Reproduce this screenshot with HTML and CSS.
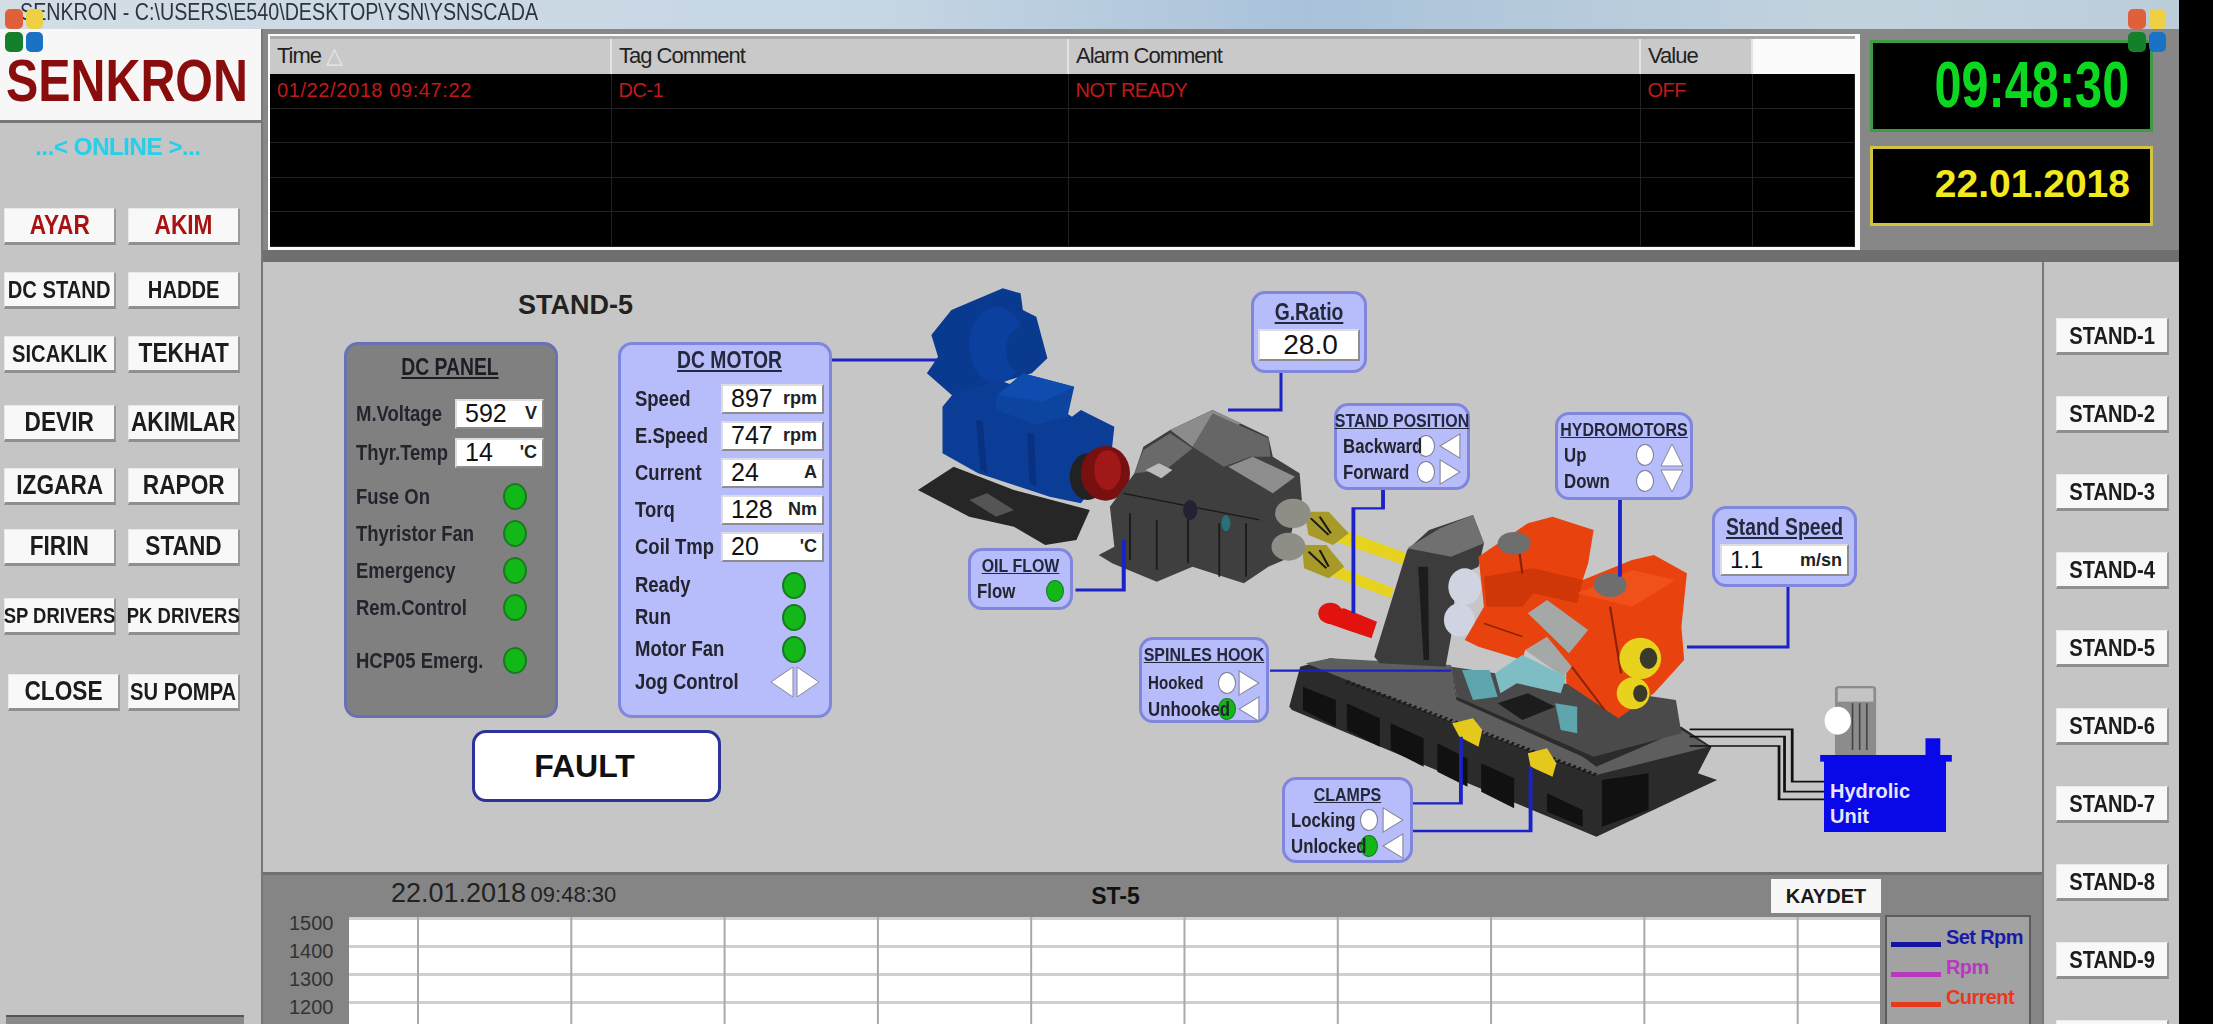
FILE: index.html
```html
<!DOCTYPE html>
<html lang="tr">
<head>
    <meta charset="UTF-8">
    <meta name="viewport" content="width=device-width, initial-scale=1.0">
    <title>SENKRON - YSNSCADA</title>
    <link rel="stylesheet" href="styles.css">
</head>
<body>
<div class="app">

    <div class="titlebar"><span>SENKRON - C:\USERS\E540\DESKTOP\YSN\YSNSCADA</span></div>

    <div class="cubes cubes-left"><i class="c1"></i><i class="c2"></i><i class="c3"></i><i class="c4"></i></div>
    <div class="cubes cubes-right"><i class="c1"></i><i class="c2"></i><i class="c3"></i><i class="c4"></i></div>

    <!-- sol menu -->
    <aside class="sidebar">
        <div class="logo"><span>SENKRON</span></div>
        <div class="online">...&lt; ONLINE &gt;...</div>
        <div class="menu">
            <div class="menu-row"><button class="btn red"><span>AYAR</span></button><button class="btn red"><span>AKIM</span></button></div>
            <div class="menu-row"><button class="btn sm"><span>DC STAND</span></button><button class="btn sm"><span>HADDE</span></button></div>
            <div class="menu-row"><button class="btn sm"><span>SICAKLIK</span></button><button class="btn"><span>TEKHAT</span></button></div>
            <div class="menu-row"><button class="btn"><span>DEVIR</span></button><button class="btn"><span>AKIMLAR</span></button></div>
            <div class="menu-row"><button class="btn"><span>IZGARA</span></button><button class="btn"><span>RAPOR</span></button></div>
            <div class="menu-row"><button class="btn"><span>FIRIN</span></button><button class="btn"><span>STAND</span></button></div>
            <div class="menu-row"><button class="btn xs"><span>SP DRIVERS</span></button><button class="btn xs"><span>PK DRIVERS</span></button></div>
            <div class="menu-row last"><button class="btn"><span>CLOSE</span></button><button class="btn sm"><span>SU POMPA</span></button></div>
        </div>
        <div class="side-foot"></div>
    </aside>

    <!-- alarm listesi ve saat -->
    <section class="band">
        <div class="alarm-wrap">
            <table class="alarms">
                <thead>
                    <tr><th class="col-time">Time <span class="sort">△</span></th><th class="col-tag">Tag Comment</th><th class="col-alarm">Alarm Comment</th><th class="col-value">Value</th><th class="col-rest"></th></tr>
                </thead>
                <tbody>
                    <tr><td class="stamp-cell">01/22/2018 09:47:22</td><td>DC-1</td><td>NOT READY</td><td>OFF</td><td></td></tr>
                    <tr><td></td><td></td><td></td><td></td><td></td></tr>
                    <tr><td></td><td></td><td></td><td></td><td></td></tr>
                    <tr><td></td><td></td><td></td><td></td><td></td></tr>
                    <tr><td></td><td></td><td></td><td></td><td></td></tr>
                </tbody>
            </table>
        </div>
        <div class="clocks">
            <div class="clock"><span>09:48:30</span></div>
            <div class="date">22.01.2018</div>
        </div>
    </section>

    <!-- tesis semasi -->
    <main class="plant">
        <svg class="machine" viewBox="263 262 1779 613" width="1779" height="613">
            <!-- baglanti hatlari (alt) -->
            <g fill="none" stroke="#1a22c8" stroke-width="3">
                <path d="M832 360H951"/>
                <path d="M1281 373V410H1228"/>
                <path d="M1788 587V647H1687"/>
            </g>

            <!-- motor ve redüktör -->
            <g transform="translate(880 260) scale(.4464 .3333)">
                <polygon fill="#262626" points="85,690 165,620 300,690 470,750 440,840 370,855 300,800 200,770"/>
                <polygon fill="#555" points="200,720 240,700 300,750 260,770"/>
                <polygon fill="#0a3a90" points="115,225 160,150 275,85 315,100 320,150 350,170 375,295 340,340 265,370 255,420 165,410 105,340 130,290"/>
                <ellipse fill="#0b40a0" cx="262" cy="255" rx="62" ry="115"/>
                <ellipse fill="#0a3a8c" cx="320" cy="270" rx="38" ry="70"/>
                <polygon fill="#0b3c96" points="165,400 265,360 350,400 430,470 450,450 525,500 515,620 450,730 380,710 220,640 140,580 140,440"/>
                <polygon fill="#0a3080" points="215,480 225,630 240,640 230,485"/>
                <polygon fill="#0a3080" points="330,520 335,670 350,680 345,520"/>
                <polygon fill="#0c44a0" points="260,405 320,340 435,380 420,470 350,495 260,450"/>
                <polygon fill="#0e4cb0" points="265,405 320,340 435,380 365,425"/>
                <ellipse fill="#222" cx="465" cy="650" rx="40" ry="70"/>
                <ellipse fill="#781010" cx="505" cy="640" rx="55" ry="82"/>
                <ellipse fill="#a01818" cx="510" cy="630" rx="30" ry="60"/>
                <polygon fill="#3f3f3f" points="515,740 570,640 590,560 650,510 745,450 870,530 880,590 940,640 945,720 925,800 905,900 870,920 815,970 700,920 620,965 520,910 490,885 525,860"/>
                <polygon fill="#8c8c8c" points="650,510 745,450 810,490 700,560"/>
                <polygon fill="#6a6a6a" points="590,570 650,520 700,565 640,630 570,640"/>
                <polygon fill="#bbb" points="595,630 625,610 655,630 630,655"/>
                <polygon fill="#666" points="745,460 870,535 875,590 830,590 770,620 700,560"/>
                <polygon fill="#8e8e8e" points="780,620 835,590 930,650 880,700"/>
                <g stroke="#1a1a1a" stroke-width="4" fill="none">
                    <path d="M545 700 L850 780M560 760L560 900M620 780L620 930M690 760V910M760 790V950M820 790V950"/>
                </g>
                <ellipse fill="#223" cx="695" cy="750" rx="16" ry="30"/>
                <ellipse fill="#2a7078" cx="775" cy="790" rx="10" ry="24"/>
                <!-- miller -->
                <polygon fill="#e5d320" points="1020,800 1180,880 1175,915 1010,840"/>
                <polygon fill="#e5d320" points="1010,910 1150,985 1145,1015 1005,945"/>
                <polygon fill="#a89a28" points="950,755 1005,755 1050,820 1015,855 960,825"/>
                <polygon fill="#a89a28" points="945,855 1000,855 1040,920 1005,955 950,925"/>
                <path d="M965 775l40 50M985 770l25 50M960 875l40 50M985 870l20 50" stroke="#1a1a1a" stroke-width="5" fill="none"/>
                <ellipse fill="#8e8e86" cx="925" cy="760" rx="40" ry="44"/>
                <ellipse fill="#8e8e86" cx="915" cy="860" rx="38" ry="42"/>
                <path d="M546 840V990H438" fill="none" stroke="#1a22c8" stroke-width="9"/>
            </g>

            <!-- hadde standi -->
            <g transform="translate(1100 480) scale(.5485 .3333)">
                <polygon fill="#2b2b2b" points="345,680 365,560 420,535 520,560 640,560 650,650 880,760 1060,740 1115,800 1090,880 1125,900 905,1070 350,690"/>
                <polygon fill="#5e5e5e" points="375,550 420,535 640,555 650,660 880,830 905,860 1060,750 1110,800 905,885 640,725 450,600"/>
                <polygon fill="#4a4a4a" points="640,560 1050,660 1060,760 900,830 650,650"/>
                <path d="M450 605L905 885" fill="none" stroke="#1a1a1a" stroke-width="10" stroke-dasharray="5 6"/>
                <g fill="#111">
                    <polygon points="370,620 430,660 430,740 370,690"/>
                    <polygon points="450,670 510,715 510,800 450,750"/>
                    <polygon points="530,730 590,775 590,860 530,810"/>
                    <polygon points="615,790 670,835 670,920 615,875"/>
                    <polygon points="695,850 755,895 755,985 695,935"/>
                    <polygon points="815,940 880,990 880,1040 815,995"/>
                    <polygon points="915,900 1000,880 1000,990 915,1040"/>
                </g>
                <polygon fill="#3c3c3c" points="500,530 560,210 600,150 680,105 700,190 690,260 650,290 640,470 630,560 510,550"/>
                <polygon fill="#707070" points="560,205 620,145 680,105 700,190 640,230"/>
                <polygon fill="#1c1c1c" points="580,260 590,540 600,540 598,260"/>
                <ellipse fill="#cfd3e2" cx="665" cy="320" rx="30" ry="55"/>
                <ellipse fill="#cfd3e2" cx="655" cy="420" rx="28" ry="50"/>
                <polygon fill="#e2130f" points="420,390 445,385 505,425 495,475 450,450 415,430"/>
                <ellipse fill="#e2130f" cx="420" cy="400" rx="22" ry="32"/>
                <polygon fill="#e8430f" points="665,480 700,380 690,230 780,130 825,110 900,150 890,250 880,300 970,240 1010,225 1070,280 1060,440 1065,540 1010,640 945,715 850,610 850,540 775,510 770,540 690,500"/>
                <polygon fill="#cf3608" points="700,290 790,265 880,300 870,370 790,340 770,380 705,380"/>
                <polygon fill="#f0501a" points="870,340 970,270 1050,300 970,380"/>
                <path d="M760 160l10 120M930 380l20 200M860 560l60 130M700 430l70 40" fill="none" stroke="#8a2206" stroke-width="4"/>
                <polygon fill="#a4a9a8" points="780,400 815,360 890,450 855,520"/>
                <polygon fill="#a4a9a8" points="775,510 815,470 860,560 845,590"/>
                <polygon fill="#7ebdc4" points="720,580 770,525 850,590 840,640 760,610 730,640"/>
                <polygon fill="#5fa5ae" points="660,570 710,570 725,650 680,660"/>
                <polygon fill="#5fa5ae" points="830,670 870,680 870,760 840,750"/>
                <polygon fill="#1c1c1c" points="725,670 780,640 830,680 770,720"/>
                <ellipse fill="#6e6e6e" cx="755" cy="190" rx="30" ry="34"/>
                <ellipse fill="#6e6e6e" cx="930" cy="315" rx="30" ry="36"/>
                <ellipse fill="#e8d21e" cx="985" cy="535" rx="38" ry="62"/>
                <ellipse fill="#3a3a2a" cx="1000" cy="535" rx="16" ry="32"/>
                <ellipse fill="#e8d21e" cx="972" cy="640" rx="30" ry="48"/>
                <ellipse fill="#3a3a2a" cx="985" cy="640" rx="13" ry="26"/>
                <polygon fill="#e5c81c" points="642,730 680,715 697,750 690,800 655,770"/>
                <polygon fill="#e5c81c" points="780,820 815,805 832,850 825,890 785,860"/>
                <!-- hidrolik boru -->
                <g fill="none" stroke="#111" stroke-width="5">
                    <path d="M1075 748H1262V905H1322"/>
                    <path d="M1075 770H1248V935H1322"/>
                    <path d="M1075 798H1238V958H1322"/>
                </g>
                <rect fill="#8c8c8c" x="1340" y="618" width="75" height="210" rx="8"/>
                <rect fill="#c4c4c4" x="1345" y="625" width="65" height="40"/>
                <path d="M1372 670V810M1385 670V810M1398 670V810" stroke="#444" stroke-width="3"/>
                <ellipse fill="#fff" cx="1345" cy="722" rx="24" ry="42"/>
                <rect fill="#0808e8" x="1505" y="775" width="27" height="60"/>
                <rect fill="#0808e8" x="1313" y="825" width="240" height="20"/>
                <g fill="none" stroke="#1a22c8" stroke-width="7">
                    <path d="M948 50V290"/>
                    <path d="M516 30V85H462V400"/>
                    <path d="M310 572H640"/>
                    <path d="M570 970H658V770"/>
                    <path d="M570 1053H785V860"/>
                </g>
            </g>
        </svg>

        <h2 class="stand-title">STAND-5</h2>

        <div class="node dc-panel">
            <h3 class="node-title">DC PANEL</h3>
            <div class="row first"><span class="lbl">M.Voltage</span><div class="value"><b>592</b><em>V</em></div></div>
            <div class="row"><span class="lbl">Thyr.Temp</span><div class="value"><b>14</b><em>'C</em></div></div>
            <div class="lamps">
                <div class="lamp-row"><span class="lbl">Fuse On</span><i class="led"></i></div>
                <div class="lamp-row"><span class="lbl">Thyristor Fan</span><i class="led"></i></div>
                <div class="lamp-row"><span class="lbl">Emergency</span><i class="led"></i></div>
                <div class="lamp-row"><span class="lbl">Rem.Control</span><i class="led"></i></div>
                <div class="lamp-row spaced"><span class="lbl">HCP05 Emerg.</span><i class="led"></i></div>
            </div>
        </div>

        <div class="node dc-motor">
            <h3 class="node-title">DC MOTOR</h3>
            <div class="row first"><span class="lbl">Speed</span><div class="value"><b>897</b><em>rpm</em></div></div>
            <div class="row"><span class="lbl">E.Speed</span><div class="value"><b>747</b><em>rpm</em></div></div>
            <div class="row"><span class="lbl">Current</span><div class="value"><b>24</b><em>A</em></div></div>
            <div class="row"><span class="lbl">Torq</span><div class="value"><b>128</b><em>Nm</em></div></div>
            <div class="row"><span class="lbl">Coil Tmp</span><div class="value"><b>20</b><em>'C</em></div></div>
            <div class="motor-lamps">
                <div class="lamp-row"><span class="lbl">Ready</span><i class="led"></i></div>
                <div class="lamp-row"><span class="lbl">Run</span><i class="led"></i></div>
                <div class="lamp-row"><span class="lbl">Motor Fan</span><i class="led"></i></div>
                <div class="lamp-row"><span class="lbl">Jog Control</span>
                    <svg class="jog" viewBox="0 0 50 32"><polygon points="23,1 1,16 23,31" fill="#fff" stroke="#889"/><polygon points="27,1 49,16 27,31" fill="#fff" stroke="#889"/></svg>
                </div>
            </div>
        </div>

        <div class="fault">FAULT</div>

        <div class="node g-ratio">
            <h3 class="node-title">G.Ratio</h3>
            <div class="value center"><b>28.0</b></div>
        </div>

        <div class="node small stand-pos">
            <h3 class="node-title">STAND POSITION</h3>
            <div class="ctl"><span class="lbl">Backward</span><i class="lamp"></i><svg class="tri" viewBox="0 0 20 24"><polygon points="19,1 1,12 19,23" fill="#fff" stroke="#889"/></svg></div>
            <div class="ctl"><span class="lbl">Forward</span><i class="lamp"></i><svg class="tri" viewBox="0 0 20 24"><polygon points="1,1 19,12 1,23" fill="#fff" stroke="#889"/></svg></div>
        </div>

        <div class="node small hydro">
            <h3 class="node-title">HYDROMOTORS</h3>
            <div class="hydro-body">
                <div class="hydro-rows">
                    <div class="ctl"><span class="lbl">Up</span><i class="lamp"></i></div>
                    <div class="ctl"><span class="lbl">Down</span><i class="lamp"></i></div>
                </div>
                <svg class="updown" viewBox="0 0 24 50"><polygon points="1,23 12,1 23,23" fill="#fff" stroke="#889"/><polygon points="1,27 12,49 23,27" fill="#fff" stroke="#889"/></svg>
            </div>
        </div>

        <div class="node small oil">
            <h3 class="node-title">OIL FLOW</h3>
            <div class="ctl"><span class="lbl">Flow</span><i class="led sm"></i></div>
        </div>

        <div class="node small spin">
            <h3 class="node-title">SPINLES HOOK</h3>
            <div class="ctl"><span class="lbl hooked">Hooked</span><i class="lamp"></i><svg class="tri" viewBox="0 0 20 24"><polygon points="1,1 19,12 1,23" fill="#fff" stroke="#889"/></svg></div>
            <div class="ctl"><span class="lbl">Unhooked</span><i class="led sm"></i><svg class="tri" viewBox="0 0 20 24"><polygon points="19,1 1,12 19,23" fill="#fff" stroke="#889"/></svg></div>
        </div>

        <div class="node speed">
            <h3 class="node-title">Stand Speed</h3>
            <div class="value"><b>1.1</b><em>m/sn</em></div>
        </div>

        <div class="node small clamps">
            <h3 class="node-title">CLAMPS</h3>
            <div class="ctl"><span class="lbl">Locking</span><i class="lamp"></i><svg class="tri" viewBox="0 0 20 24"><polygon points="1,1 19,12 1,23" fill="#fff" stroke="#889"/></svg></div>
            <div class="ctl"><span class="lbl">Unlocked</span><i class="led sm"></i><svg class="tri" viewBox="0 0 20 24"><polygon points="19,1 1,12 19,23" fill="#fff" stroke="#889"/></svg></div>
        </div>

        <div class="hyd-unit">Hydrolic<br>Unit</div>
    </main>

    <!-- stand secimi -->
    <nav class="stands">
        <button class="btn stand"><span>STAND-1</span></button>
        <button class="btn stand"><span>STAND-2</span></button>
        <button class="btn stand"><span>STAND-3</span></button>
        <button class="btn stand"><span>STAND-4</span></button>
        <button class="btn stand"><span>STAND-5</span></button>
        <button class="btn stand"><span>STAND-6</span></button>
        <button class="btn stand"><span>STAND-7</span></button>
        <button class="btn stand"><span>STAND-8</span></button>
        <button class="btn stand"><span>STAND-9</span></button>
        <button class="btn stand"></button>
    </nav>

    <!-- grafik -->
    <section class="chart">
        <div class="chart-head">
            <div class="stamp"><span class="stamp-date">22.01.2018</span> <span class="stamp-time">09:48:30</span></div>
            <div class="chart-name">ST-5</div>
            <button class="save">KAYDET</button>
        </div>
        <div class="chart-body">
            <div class="axis"><span>1500</span><span>1400</span><span>1300</span><span>1200</span></div>
            <div class="plot"></div>
            <div class="legend">
                <div class="leg blue"><i></i><span>Set Rpm</span></div>
                <div class="leg pink"><i></i><span>Rpm</span></div>
                <div class="leg orange"><i></i><span>Current</span></div>
            </div>
        </div>
    </section>
</div>
</body>
</html>
```

FILE: styles.css
```css
* {
    box-sizing: border-box;
}

html, body {
    margin: 0;
    height: 100%;
    background-color: #000;
    overflow: hidden;
}

body {
    font-family: "Liberation Sans", Arial, sans-serif;
    color: #222;
}

.app {
    position: relative;
    width: 2179px;
    height: 1024px;
    overflow: hidden;
    display: grid;
    grid-template-columns: 263px 1779px 137px;
    grid-template-rows: 29px 233px 613px 149px;
    background-color: #c5c5c5;
}

.titlebar {
    grid-column: 1 / 4;
    padding-left: 20px;
    font-size: 24px;
    line-height: 24px;
    color: #2c3440;
    white-space: nowrap;
    background: linear-gradient(90deg, #d3dde4 0%, #c6d6e4 40%, #a9c2da 60%, #c3d3de 85%, #bccdda 100%);
}

.titlebar span {
    display: inline-block;
    transform: scaleX(.82);
    transform-origin: left center;
}

.cubes {
    position: absolute;
    top: 9px;
    width: 38px;
    height: 43px;
    display: grid;
    grid-template-columns: 1fr 1fr;
    gap: 3px;
    z-index: 5;
}

.cubes i {
    border-radius: 5px;
}

.cubes-left { left: 5px; }
.cubes-right { left: 2128px; }
.c1 { background-color: #e0603a; }
.c2 { background-color: #eed044; }
.c3 { background-color: #15802c; }
.c4 { background-color: #1a72c4; }

/* sol menu */
.sidebar {
    grid-column: 1;
    grid-row: 2 / 5;
    position: relative;
    background-color: #c5c5c5;
    border-right: 2px solid #777;
}

.logo {
    height: 94px;
    padding: 22px 0 0 6px;
    font-size: 59px;
    line-height: 60px;
    font-weight: bold;
    color: #8a0d0d;
    background-color: #f7f7f7;
    border-bottom: 3px solid #777;
}

.logo span {
    display: inline-block;
    transform: scaleX(.82);
    transform-origin: left center;
}

.online {
    margin-top: 10px;
    padding-right: 26px;
    text-align: center;
    font-size: 24px;
    line-height: 28px;
    font-weight: bold;
    letter-spacing: -.4px;
    color: #27cfe8;
}

.menu {
    margin-top: 47px;
    padding-left: 4px;
}

.menu-row {
    display: flex;
    gap: 12px;
    margin-bottom: 27px;
}

.menu-row:nth-child(3) { margin-bottom: 32px; }
.menu-row:nth-child(4) { margin-bottom: 26px; }
.menu-row:nth-child(5) { margin-bottom: 24px; }
.menu-row:nth-child(6) { margin-bottom: 32px; }
.menu-row:nth-child(7) { margin-bottom: 39px; }

.menu-row .btn {
    width: 112px;
}

.menu-row.last {
    padding-left: 4px;
    gap: 8px;
}

.btn {
    display: flex;
    align-items: center;
    justify-content: center;
    height: 37px;
    padding: 0;
    font-family: inherit;
    font-size: 27px;
    font-weight: bold;
    color: #1c1c1c;
    white-space: nowrap;
    background-color: #f8f8f8;
    border: 1px solid #e8e8e8;
    border-bottom: 3px solid #8f8f8f;
    border-right: 2px solid #9a9a9a;
}

.btn span {
    flex: none;
    transform: scaleX(.84);
}

.btn.red { color: #a81212; }
.btn.sm { font-size: 24px; }
.btn.xs { font-size: 22px; }

.side-foot {
    position: absolute;
    left: 6px;
    top: 986px;
    width: 238px;
    height: 20px;
    background-color: #8a8a8a;
    border-top: 2px solid #555;
}

/* alarm bandi */
.band {
    grid-column: 2 / 4;
    grid-row: 2;
    display: flex;
    padding: 5px 0 0 5px;
    background-color: #878787;
    border-bottom: 12px solid #6f6f6f;
}

.alarm-wrap {
    width: 1592px;
    height: 216px;
    padding: 2px 5px 5px 2px;
    background-color: #fbfbfb;
}

.alarms {
    width: 1585px;
    height: 209px;
    border-collapse: collapse;
    table-layout: fixed;
    background-color: #000;
}

.alarms th {
    height: 36px;
    padding: 0 0 0 7px;
    font-size: 22px;
    font-weight: normal;
    letter-spacing: -1px;
    text-align: left;
    background-color: #c9c9c9;
    border-right: 2px solid #e4e4e4;
    border-top: 3px solid #aaa;
}

.alarms th.col-rest {
    background-color: #fbfbfb;
    border-right: 0;
}

.alarms .sort { color: #e6e6e6; }
.col-time { width: 341px; }
.col-tag { width: 457px; }
.col-alarm { width: 572px; }
.col-value { width: 112px; }

.alarms td {
    padding: 0 0 0 7px;
    height: 34.5px;
    font-size: 20px;
    letter-spacing: -.5px;
    color: #c01a1a;
    border-right: 1px solid #222;
    border-bottom: 1px solid #222;
}

.alarms td.stamp-cell {
    letter-spacing: .6px;
}

.clocks {
    margin: 6px 0 0 10px;
    width: 283px;
    display: flex;
    flex-direction: column;
    gap: 14px;
}

.clock, .date {
    background-color: #000;
    font-weight: bold;
    text-align: right;
}

.clock {
    height: 92px;
    padding-right: 31px;
    font-size: 64px;
    line-height: 84px;
    color: #0cd820;
    border: 3px solid #3f9a44;
}

.clock span {
    display: inline-block;
    transform: scaleX(.76);
    transform-origin: right center;
}

.date {
    height: 80px;
    padding-right: 20px;
    font-size: 39px;
    line-height: 70px;
    color: #f2ea1e;
    border: 3px solid #d2c440;
}

/* tesis semasi */
.plant {
    grid-column: 2;
    grid-row: 3;
    position: relative;
    background-color: #c6c6c6;
    border-bottom: 3px solid #6f6f6f;
}

.machine {
    position: absolute;
    left: 0;
    top: 0;
    filter: blur(.6px);
}

.stand-title {
    position: absolute;
    left: 255px;
    top: 27px;
    margin: 0;
    font-size: 27px;
    line-height: 32px;
    color: #222;
}

.node {
    position: absolute;
    padding: 8px 10px;
    background-color: #b7bcfa;
    border: 3px solid #7f86dc;
    border-radius: 14px;
}

.node-title {
    display: flex;
    justify-content: center;
    margin: 0;
    font-size: 23px;
    line-height: 24px;
    font-weight: bold;
    white-space: nowrap;
    text-decoration: underline;
    color: #24283c;
    transform: scaleX(.84);
}

.lbl {
    flex: 1;
    min-width: 0;
    font-size: 22px;
    font-weight: bold;
    color: #24242e;
    white-space: nowrap;
    transform: scaleX(.84);
    transform-origin: left center;
}

.value {
    display: flex;
    align-items: center;
    justify-content: space-between;
    height: 30px;
    padding: 0 5px 0 8px;
    background-color: #fff;
    border: 2px solid #8d8d8d;
    border-top-color: #ddd;
    border-left-color: #ddd;
}

.value b {
    font-size: 25px;
    font-weight: normal;
    color: #111;
}

.value em {
    font-size: 18px;
    font-style: normal;
    font-weight: bold;
    color: #222;
}

.value.center {
    justify-content: center;
}

.row {
    display: flex;
    align-items: center;
    height: 37px;
}

.led {
    display: block;
    width: 24px;
    height: 27px;
    flex: none;
    border-radius: 50%;
    background-color: #12b818;
    border: 2px solid #1a7a20;
}

.led.sm {
    width: 18px;
    height: 22px;
    border-width: 1px;
}

.lamp {
    display: block;
    flex: none;
    width: 18px;
    height: 22px;
    border-radius: 50%;
    background-color: #fff;
    border: 1px solid #7a7a90;
}

.lamp-row {
    display: flex;
    align-items: center;
    height: 37px;
}

.dc-panel {
    left: 81px;
    top: 80px;
    width: 214px;
    height: 376px;
    padding: 5px 11px 0 9px;
    background-color: #808080;
    border-color: #6a70b4;
}

.dc-panel .node-title {
    margin-top: 5px;
    color: #1c1c26;
}

.dc-panel .row .value {
    width: 89px;
    flex: none;
}

.dc-panel .row.first {
    margin-top: 15px;
}

.dc-panel .row {
    height: 39px;
}

.dc-panel .lamps {
    margin-top: 6px;
    padding-right: 17px;
}

.dc-panel .lamp-row.spaced {
    margin-top: 16px;
}

.dc-motor {
    left: 355px;
    top: 80px;
    width: 214px;
    height: 376px;
    padding: 3px 5px 0 14px;
}

.dc-motor .row.first {
    margin-top: 8px;
}

.dc-motor .row .value {
    width: 103px;
    flex: none;
}

.motor-lamps {
    margin-top: 4px;
}

.motor-lamps .lamp-row {
    height: 32px;
    padding-right: 18px;
}

.motor-lamps .lamp-row:last-child {
    height: 34px;
    padding-right: 4px;
}

.jog {
    flex: none;
    width: 50px;
    height: 32px;
}

.fault {
    position: absolute;
    left: 209px;
    top: 468px;
    width: 249px;
    height: 72px;
    padding-right: 24px;
    text-align: center;
    font-size: 32px;
    line-height: 66px;
    font-weight: bold;
    color: #111;
    background-color: #fff;
    border: 3px solid #2c329c;
    border-radius: 14px;
}

.g-ratio {
    left: 988px;
    top: 29px;
    width: 116px;
    height: 82px;
    padding: 6px 4px 0;
}

.g-ratio .value {
    margin-top: 5px;
    height: 32px;
}

.g-ratio .value b {
    font-size: 28px;
}

.small {
    padding: 3px 6px 0;
}

.small .node-title {
    font-size: 19px;
    line-height: 24px;
}

.ctl {
    display: flex;
    align-items: center;
    height: 26px;
    gap: 4px;
}

.ctl .lbl {
    font-size: 20px;
}

.ctl .lbl.hooked {
    font-size: 18px;
}

.tri {
    flex: none;
    width: 22px;
    height: 28px;
}

.stand-pos {
    left: 1071px;
    top: 141px;
    width: 136px;
    height: 87px;
}

.hydro {
    left: 1292px;
    top: 150px;
    width: 138px;
    height: 88px;
}

.hydro-body {
    display: flex;
    align-items: center;
    gap: 6px;
}

.hydro-rows {
    flex: 1;
}

.updown {
    flex: none;
    width: 24px;
    height: 50px;
}

.oil {
    left: 705px;
    top: 286px;
    width: 105px;
    height: 62px;
}

.spin {
    left: 876px;
    top: 375px;
    width: 130px;
    height: 86px;
}

.spin .node-title {
    margin-bottom: 3px;
}

.spin .ctl {
    gap: 2px;
}

.speed {
    left: 1449px;
    top: 244px;
    width: 145px;
    height: 81px;
    padding: 6px 5px 0;
}

.speed .value {
    margin-top: 5px;
    height: 32px;
}

.speed .value b {
    font-size: 24px;
}

.clamps {
    left: 1019px;
    top: 515px;
    width: 131px;
    height: 86px;
}

.hyd-unit {
    position: absolute;
    left: 1561px;
    top: 495px;
    width: 122px;
    height: 75px;
    padding: 22px 0 0 6px;
    font-size: 20px;
    line-height: 25px;
    font-weight: bold;
    color: #e6e6ff;
    background-color: #0808e8;
}

/* stand butonlari */
.stands {
    grid-column: 3;
    grid-row: 3 / 5;
    padding: 56px 0 0 12px;
    background-color: #c5c5c5;
    border-left: 2px solid #777;
    display: flex;
    flex-direction: column;
    gap: 41px;
}

.btn.stand {
    flex: none;
    width: 113px;
    font-size: 24px;
}

/* grafik */
.chart {
    grid-column: 2;
    grid-row: 4;
    background-color: #858585;
}

.chart-head {
    position: relative;
    height: 42px;
    display: flex;
    align-items: center;
    justify-content: center;
}

.stamp {
    position: absolute;
    left: 128px;
    top: 0;
    line-height: 36px;
}

.stamp-date {
    font-size: 27px;
    color: #222;
}

.stamp-time {
    font-size: 22px;
    color: #222;
}

.chart-name {
    font-size: 23px;
    font-weight: bold;
    color: #111;
    margin-left: -74px;
}

.save {
    position: absolute;
    left: 1508px;
    top: 4px;
    width: 110px;
    height: 34px;
    padding: 0;
    font-family: inherit;
    font-size: 20px;
    font-weight: bold;
    color: #1a1a1a;
    background-color: #f7f7f7;
    border: 0;
}

.chart-body {
    display: flex;
    align-items: flex-start;
}

.axis {
    width: 86px;
    margin-top: -5px;
    padding-left: 26px;
    display: flex;
    flex-direction: column;
}

.axis span {
    height: 28px;
    font-size: 20px;
    line-height: 22px;
    color: #333;
}

.plot {
    width: 1531px;
    height: 120px;
    background-color: #fff;
    background-image:
        linear-gradient(90deg, #a8a8a8 2px, transparent 2px),
        linear-gradient(#cfcfcf 3px, transparent 3px);
    background-size: 153.3px 100%, 100% 28px;
    background-position: 68px 0, 0 28px;
}

.legend {
    width: 146px;
    height: 120px;
    margin: -2px 0 0 5px;
    padding: 5px 2px 0 4px;
    background-color: #a2a2a2;
    border: 2px solid #5c5c5c;
    border-bottom: 0;
}

.leg {
    display: flex;
    align-items: center;
    height: 30px;
    gap: 5px;
    font-size: 20px;
    font-weight: bold;
    letter-spacing: -.6px;
    white-space: nowrap;
}

.leg i {
    display: block;
    flex: none;
    width: 50px;
    height: 5px;
    margin-top: 14px;
}

.leg.blue { color: #1a1aa8; }
.leg.blue i { background-color: #1414a0; }
.leg.pink { color: #b838c0; }
.leg.pink i { background-color: #b838c0; }
.leg.orange { color: #e8381c; }
.leg.orange i { background-color: #e8381c; }
```
